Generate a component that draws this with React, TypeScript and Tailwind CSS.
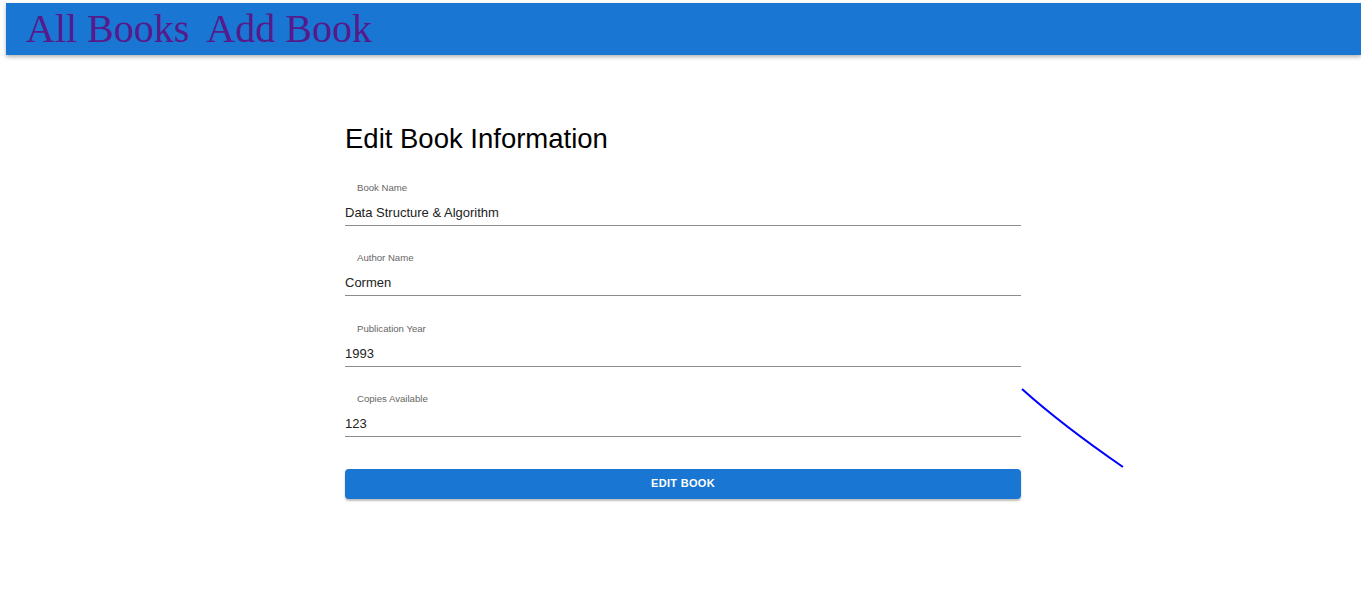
import React from 'react';

const fields = [
  { label: 'Book Name', value: 'Data Structure & Algorithm' },
  { label: 'Author Name', value: 'Cormen' },
  { label: 'Publication Year', value: '1993' },
  { label: 'Copies Available', value: '123' },
];

export default function App() {
  return (
    <div className="relative min-h-[615px] bg-white font-['Liberation_Sans',Arial,sans-serif]">
      <nav className="ml-[6px] mt-[3px] flex h-[52px] items-center gap-[17px] bg-[#1976d2] pl-[20px] shadow-[0_2px_4px_rgba(0,0,0,0.3)]">
        <a href="#" className="font-['Liberation_Serif',serif] text-[40px] leading-none text-[#551a8b]">
          All Books
        </a>
        <a href="#" className="font-['Liberation_Serif',serif] text-[40px] leading-none text-[#551a8b]">
          Add Book
        </a>
      </nav>

      <div className="ml-[345px] mt-[68px] w-[676px]">
        <h1 className="text-[27.5px] leading-[32px] text-black">Edit Book Information</h1>
        <form className="mt-[27px] flex flex-col gap-[26.4px]" onSubmit={(e) => e.preventDefault()}>
          {fields.map((field) => (
            <label key={field.label} className="flex flex-col">
              <span className="pl-[12px] text-[9.6px] leading-[12px] text-[#666]">{field.label}</span>
              <input
                defaultValue={field.value}
                className="mt-[6px] h-[26px] border-b border-[#8c8c8c] text-[13px] text-[#222] outline-none"
              />
            </label>
          ))}
          <button
            type="submit"
            className="mt-[5px] h-[30px] rounded-[4px] bg-[#1976d2] text-[11px] font-bold tracking-[0.3px] text-white shadow-[0_2px_2px_rgba(0,0,0,0.25)]"
          >
            EDIT BOOK
          </button>
        </form>
      </div>

      <svg className="absolute left-[1020px] top-[384px]" width="110" height="86" viewBox="0 0 110 86">
        <path d="M2 2 Q41.5 37.6 103 80" fill="none" stroke="#0000ff" strokeWidth="2" />
      </svg>
    </div>
  );
}
